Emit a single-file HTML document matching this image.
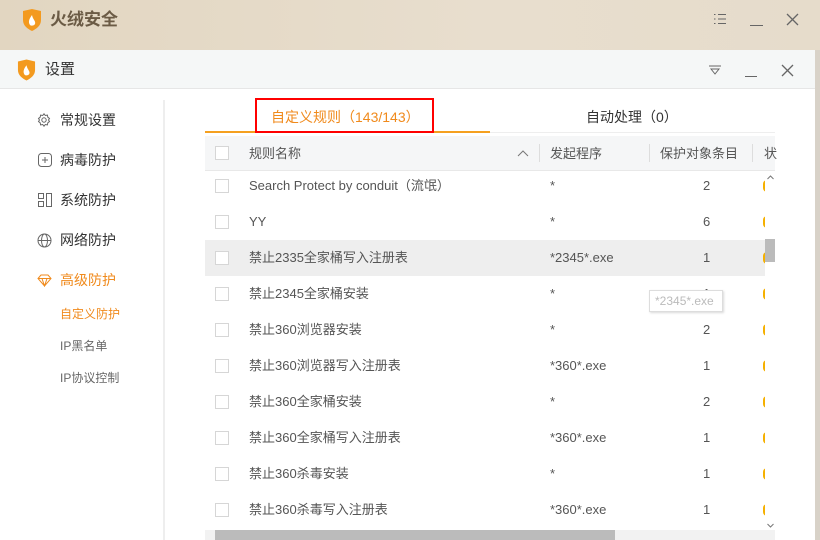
<!DOCTYPE html>
<html><head><meta charset="utf-8"><style>
*{margin:0;padding:0;box-sizing:border-box}
body{width:820px;height:540px;overflow:hidden;position:relative;font-family:"Liberation Sans","Noto Sans CJK SC",sans-serif;background:linear-gradient(90deg,#e2d6c1,#e8dece 60%,#e6dccb);}
.abs{position:absolute}
.t{font-size:13px;line-height:14px;color:#555;white-space:nowrap}
.cb{position:absolute;left:215px;width:14px;height:14px;border:1px solid #d6d6d6;background:#fff}
</style></head><body>
<svg class="abs" style="left:22px;top:9px" width="20" height="22" viewBox="0 0 20 22"><path d="M1 2 L10 0 L19 2 L19 11 C19 17 14 20 10 22 C6 20 1 17 1 11Z" fill="#f39a1f"/><path d="M10 6 C7 10 6 13 8 16 C9 17 12 17 13 15 C14 12 11 11 10 6Z" fill="#fff"/></svg>
<div class="abs" style="left:50px;top:11px;font-size:17px;line-height:18px;font-weight:bold;color:#6b5b45">火绒安全</div>
<svg class="abs" style="left:713px;top:13px" width="14" height="12"><path d="M1 1.5h1.5M1 6h1.5M1 10.5h1.5M5 1.5h8M5 6h8M5 10.5h8" stroke="#666"/></svg>
<div class="abs" style="left:750px;top:25px;width:13px;height:1px;background:#666"></div>
<svg class="abs" style="left:786px;top:13px" width="13" height="13"><path d="M1 1L12 12M12 1L1 12" stroke="#666" stroke-width="1.3"/></svg>
<div class="abs" style="left:815px;top:50px;width:5px;height:490px;background:#d8d2c8"></div>
<div class="abs" style="left:0;top:50px;width:815px;height:490px;background:#fff"></div>
<div class="abs" style="left:0;top:50px;width:815px;height:39px;background:#f5f7f7;border-bottom:1px solid #e6e6e6"></div>
<svg class="abs" style="left:17px;top:59px" width="19" height="22" viewBox="0 0 20 22"><path d="M1 2 L10 0 L19 2 L19 11 C19 17 14 20 10 22 C6 20 1 17 1 11Z" fill="#f39a1f"/><path d="M10 6 C7 10 6 13 8 16 C9 17 12 17 13 15 C14 12 11 11 10 6Z" fill="#fff"/></svg>
<div class="abs" style="left:45px;top:62px;font-size:15px;line-height:16px;color:#333">设置</div>
<svg class="abs" style="left:708px;top:65px" width="14" height="10"><path d="M1 1H13M3 4L7 9L11 4Z" stroke="#666" fill="none"/></svg>
<div class="abs" style="left:745px;top:76px;width:12px;height:1px;background:#666"></div>
<svg class="abs" style="left:781px;top:64px" width="13" height="13"><path d="M1 1L12 12M12 1L1 12" stroke="#666" stroke-width="1.3"/></svg>
<div class="abs" style="left:163px;top:100px;width:2px;height:440px;background:#eee"></div>
<svg class="abs" style="left:37px;top:113px" width="14" height="14" viewBox="0 0 14 14"><circle cx="7" cy="7" r="2.2" fill="none" stroke="#666"/><path d="M7 .8l1.3 1.7 2.1-.4.4 2.1 1.7 1.3-1 1.5 1 1.5-1.7 1.3-.4 2.1-2.1-.4L7 13.2l-1.3-1.7-2.1.4-.4-2.1L1.5 8.5l1-1.5-1-1.5 1.7-1.3.4-2.1 2.1.4Z" fill="none" stroke="#666"/></svg>
<div class="abs t" style="left:60px;top:113px;font-size:14px;line-height:15px;color:#333">常规设置</div>
<svg class="abs" style="left:38px;top:153px" width="14" height="14"><rect x=".5" y=".5" width="13" height="13" rx="3" fill="none" stroke="#666"/><path d="M7 4v6M4 7h6" stroke="#666"/></svg>
<div class="abs t" style="left:60px;top:153px;font-size:14px;line-height:15px;color:#333">病毒防护</div>
<svg class="abs" style="left:38px;top:193px" width="14" height="14"><rect x=".5" y=".5" width="5" height="5" fill="none" stroke="#666"/><rect x=".5" y="8.5" width="5" height="5" fill="none" stroke="#666"/><rect x="8.5" y=".5" width="5" height="13" fill="none" stroke="#666"/></svg>
<div class="abs t" style="left:60px;top:193px;font-size:14px;line-height:15px;color:#333">系统防护</div>
<svg class="abs" style="left:37px;top:233px" width="15" height="15"><circle cx="7.5" cy="7.5" r="6.5" fill="none" stroke="#666"/><ellipse cx="7.5" cy="7.5" rx="3" ry="6.5" fill="none" stroke="#666"/><path d="M1 7.5h13" stroke="#666"/></svg>
<div class="abs t" style="left:60px;top:233px;font-size:14px;line-height:15px;color:#333">网络防护</div>
<svg class="abs" style="left:37px;top:274px" width="15" height="13"><path d="M1 4.5L4 1h7l3 3.5L7.5 12ZM1 4.5h13M5 4.5l2.5 7.5 2.5-7.5" fill="none" stroke="#f08a1c"/></svg>
<div class="abs t" style="left:60px;top:273px;font-size:14px;line-height:15px;color:#f08a1c">高级防护</div>
<div class="abs t" style="left:60px;top:308px;font-size:12px;line-height:13px;color:#f08a1c">自定义防护</div>
<div class="abs t" style="left:60px;top:340px;font-size:12px;line-height:13px;color:#666">IP黑名单</div>
<div class="abs t" style="left:60px;top:372px;font-size:12px;line-height:13px;color:#666">IP协议控制</div>
<div class="abs" style="left:205px;top:131px;width:285px;height:2px;background:#f5a01f"></div>
<div class="abs" style="left:490px;top:132px;width:285px;height:1px;background:#eee"></div>
<div class="abs" style="left:255px;top:98px;width:179px;height:35px;border:2px solid #f00"></div>
<div class="abs t" style="left:271px;top:110px;font-size:14px;line-height:15px;color:#f08a1c">自定义规则（143/143）</div>
<div class="abs t" style="left:586px;top:110px;font-size:14px;line-height:15px;color:#333">自动处理（0）</div>
<div class="abs" style="left:205px;top:136px;width:570px;height:35px;background:#f5f6f7;border-bottom:1px solid #e8e8e8"></div>
<div class="cb" style="top:146px"></div>
<div class="abs t" style="left:249px;top:147px">规则名称</div>
<svg class="abs" style="left:517px;top:150px" width="12" height="7"><path d="M1 6l5-5 5 5" fill="none" stroke="#777"/></svg>
<div class="abs" style="left:539px;top:144px;width:1px;height:18px;background:#ddd"></div>
<div class="abs t" style="left:550px;top:147px">发起程序</div>
<div class="abs" style="left:649px;top:144px;width:1px;height:18px;background:#ddd"></div>
<div class="abs t" style="left:660px;top:147px">保护对象条目</div>
<div class="abs" style="left:752px;top:144px;width:1px;height:18px;background:#ddd"></div>
<div class="abs t" style="left:764px;top:147px">状</div>
<div class="abs" style="left:205px;top:240px;width:560px;height:36px;background:#eee"></div>
<div class="cb" style="top:179px"></div><div class="abs t" style="left:249px;top:179px">Search Protect by conduit（流氓）</div><div class="abs t" style="left:550px;top:179px">*</div><div class="abs t" style="left:703px;top:179px">2</div>
<div class="cb" style="top:215px"></div><div class="abs t" style="left:249px;top:215px">YY</div><div class="abs t" style="left:550px;top:215px">*</div><div class="abs t" style="left:703px;top:215px">6</div>
<div class="cb" style="top:251px"></div><div class="abs t" style="left:249px;top:251px">禁止2335全家桶写入注册表</div><div class="abs t" style="left:550px;top:251px">*2345*.exe</div><div class="abs t" style="left:703px;top:251px">1</div>
<div class="cb" style="top:287px"></div><div class="abs t" style="left:249px;top:287px">禁止2345全家桶安装</div><div class="abs t" style="left:550px;top:287px">*</div><div class="abs t" style="left:703px;top:287px">1</div>
<div class="cb" style="top:323px"></div><div class="abs t" style="left:249px;top:323px">禁止360浏览器安装</div><div class="abs t" style="left:550px;top:323px">*</div><div class="abs t" style="left:703px;top:323px">2</div>
<div class="cb" style="top:359px"></div><div class="abs t" style="left:249px;top:359px">禁止360浏览器写入注册表</div><div class="abs t" style="left:550px;top:359px">*360*.exe</div><div class="abs t" style="left:703px;top:359px">1</div>
<div class="cb" style="top:395px"></div><div class="abs t" style="left:249px;top:395px">禁止360全家桶安装</div><div class="abs t" style="left:550px;top:395px">*</div><div class="abs t" style="left:703px;top:395px">2</div>
<div class="cb" style="top:431px"></div><div class="abs t" style="left:249px;top:431px">禁止360全家桶写入注册表</div><div class="abs t" style="left:550px;top:431px">*360*.exe</div><div class="abs t" style="left:703px;top:431px">1</div>
<div class="cb" style="top:467px"></div><div class="abs t" style="left:249px;top:467px">禁止360杀毒安装</div><div class="abs t" style="left:550px;top:467px">*</div><div class="abs t" style="left:703px;top:467px">1</div>
<div class="cb" style="top:503px"></div><div class="abs t" style="left:249px;top:503px">禁止360杀毒写入注册表</div><div class="abs t" style="left:550px;top:503px">*360*.exe</div><div class="abs t" style="left:703px;top:503px">1</div>
<div class="abs" style="left:763px;top:180px;width:4px;height:12px;background:#f5b000;border-radius:4px 0 0 4px;box-shadow:0 36px #f5b000,0 72px #f5b000,0 108px #f5b000,0 144px #f5b000,0 180px #f5b000,0 216px #f5b000,0 252px #f5b000,0 288px #f5b000,0 324px #f5b000"></div>
<div class="abs" style="left:765px;top:171px;width:10px;height:359px;background:#fff"></div>
<svg class="abs" style="left:767px;top:175px" width="7" height="5"><path d="M.5 4L3.5 1 6.5 4" fill="none" stroke="#777"/></svg>
<div class="abs" style="left:765px;top:239px;width:10px;height:23px;background:#bbb"></div>
<svg class="abs" style="left:767px;top:523px" width="7" height="5"><path d="M.5 1L3.5 4 6.5 1" fill="none" stroke="#777"/></svg>
<div class="abs" style="left:205px;top:530px;width:570px;height:10px;background:#f2f2f2"></div>
<div class="abs" style="left:215px;top:530px;width:400px;height:10px;background:#bbb"></div>
<div class="abs" style="left:649px;top:290px;width:74px;height:22px;background:#fff;border:1px solid #ddd;box-shadow:1px 1px 2px rgba(0,0,0,.15);font-size:12px;line-height:16px;color:#bbb;padding:2px 5px">*2345*.exe</div>
</body></html>
